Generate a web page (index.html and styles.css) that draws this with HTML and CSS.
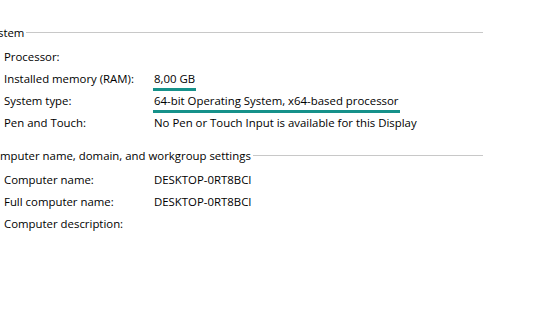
FILE: index.html
```html
<!DOCTYPE html>
<html lang="en">
<head>
    <meta charset="UTF-8">
    <title>System</title>
    <link rel="stylesheet" href="styles.css">
</head>
<body>
    <div class="panel">
        <section class="group">
            <div class="group-title"><span>System</span></div>
            <div class="row"><span class="label">Processor:</span><span class="value"></span></div>
            <div class="row"><span class="label">Installed memory (RAM):</span><span class="value mark">8,00 GB</span></div>
            <div class="row"><span class="label">System type:</span><span class="value mark">64-bit Operating System, x64-based processor</span></div>
            <div class="row"><span class="label">Pen and Touch:</span><span class="value">No Pen or Touch Input is available for this Display</span></div>
        </section>

        <section class="group">
            <div class="group-title"><span>Computer name, domain, and workgroup settings</span></div>
            <div class="row"><span class="label">Computer name:</span><span class="value">DESKTOP-0RT8BCI</span></div>
            <div class="row"><span class="label">Full computer name:</span><span class="value">DESKTOP-0RT8BCI</span></div>
            <div class="row"><span class="label">Computer description:</span><span class="value"></span></div>
        </section>
    </div>
</body>
</html>
```

FILE: styles.css
```css
body {
    margin: 0;
    background-color: #fff;
    color: #000;
    font-family: "Open Sans", "Noto Sans", sans-serif;
    font-size: 11.4px;
    overflow: hidden;
}
.panel {
    width: 483px;
    padding-top: 24px;
}
.group {
    margin-bottom: 10px;
}
.group-title {
    display: flex;
    align-items: center;
    margin-left: -14px;
    height: 16px;
    margin-bottom: 9px;
}
.group-title::after {
    content: '';
    flex: 1;
    border-top: 1px solid #c8c8c8;
    margin-left: 2px;
}
.row {
    display: flex;
    height: 22px;
    padding-left: 4px;
}
.label {
    width: 150px;
}
.value {
    position: relative;
}
.mark::after {
    content: '';
    position: absolute;
    left: -1px;
    right: -1px;
    bottom: 2px;
    height: 3px;
    background-color: #16918a;
}
```
